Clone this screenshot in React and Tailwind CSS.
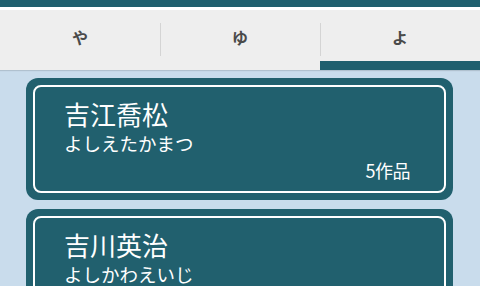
import React from 'react';

const tabs = ['や', 'ゆ', 'よ'];

const authors = [
    { name: '吉江喬松', kana: 'よしえたかまつ', works: 5 },
    { name: '吉川英治', kana: 'よしかわえいじ', works: 12 },
];

const AuthorCard = ({ author }) => (
    <div className="shrink-0 rounded-[12px] bg-[#21606e] p-[7px]">
        <div className="flex h-[108px] flex-col rounded-[8px] border-2 border-white pl-[29px] pr-[34px] pt-[12px] text-white">
            <div className="text-[26px] leading-[30px]">{author.name}</div>
            <div className="mt-[2px] text-[18.5px] leading-[24px]">{author.kana}</div>
            <div className="mt-[3px] self-end text-[18px] leading-[24px] tracking-[-0.5px]">{author.works}作品</div>
        </div>
    </div>
);

const App = () => {
    return (
        <div
            className="flex h-[286px] w-[480px] flex-col overflow-hidden bg-[#c9dcec]"
            style={{ fontFamily: '"Noto Sans CJK JP", "Noto Sans", sans-serif' }}
        >
            <div className="h-[7px] shrink-0 bg-[#1f5f6e]" />
            <div className="h-[3px] shrink-0 bg-white" />

            <div className="flex h-[60px] shrink-0 bg-[#eeeeee] shadow-[0_1px_1px_rgba(0,0,0,0.12)]">
                {tabs.map((tab, i) => (
                    <div key={tab} className="relative flex flex-1 items-center justify-center">
                        {i > 0 && <span className="absolute left-0 top-[13px] h-[33px] w-px bg-[#d4d4d4]" />}
                        <span className="-mt-[7px] text-[16px] font-bold text-[#4a4a4a]">{tab}</span>
                        {i === 2 && <span className="absolute bottom-0 left-0 right-0 h-[9px] bg-[#1f5f6e]" />}
                    </div>
                ))}
            </div>

            <div className="flex flex-col gap-[9px] pl-[26px] pr-[27px] pt-[8px]">
                {authors.map(author => (
                    <AuthorCard key={author.name} author={author} />
                ))}
            </div>
        </div>
    );
};

export default App;
